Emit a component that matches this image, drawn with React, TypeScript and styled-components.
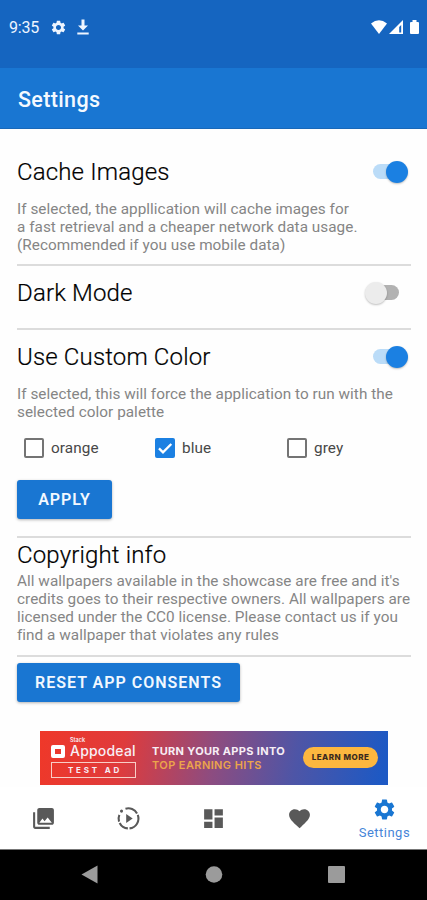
import React from "react";
import styled, { createGlobalStyle } from "styled-components";
import { MdSettings, MdPhotoLibrary, MdDashboard, MdFavorite } from "react-icons/md";

const GlobalStyle = createGlobalStyle`
  * { box-sizing: border-box; }
  body { margin: 0; background: #fff; font-family: Roboto, sans-serif; }
`;
const Screen = styled.div`
  width: 427px; height: 900px; overflow: hidden; background: #fefefe;
  display: flex; flex-direction: column;
`;
const StatusBar = styled.div`
  height: 68px; flex: none; background: #1565c0; color: #eef5ff;
  display: flex; align-items: flex-start; padding: 17px 7px 0 9px;
`;
const Clock = styled.span`
  width: 41px; font-size: 16px; line-height: 22px; letter-spacing: -0.2px;
`;
const StatusIcons = styled.div`
  display: flex; height: 20px; align-items: center; gap: 8px; flex: 1;
`;
const SystemIcons = styled.svg`display: block; margin-top: 2px;`;
const AppBar = styled.header`
  height: 61px; flex: none; background: #1976d2; color: #f4f9ff;
  border-bottom: 1px solid #1968b8;
  display: flex; align-items: center; padding: 3px 18px 0;
`;
const Title = styled.h1`
  margin: 0; font-size: 21.5px; line-height: 28px; font-weight: 500; letter-spacing: 0.35px;
`;
const Scroll = styled.div`height: 658px; flex: none;`;
const Content = styled.main`
  padding: 0 16px 0 17px;
`;
const Section = styled.section<{ $h: number; $top: number }>`
  height: ${p => p.$h}px; padding-top: ${p => p.$top}px;
  border-bottom: 2px solid #dcdcdc;
`;
const Row = styled.div`
  display: flex; justify-content: space-between; align-items: center; height: 32px;
`;
const Heading = styled.h2`
  margin: 0; font-size: 24px; line-height: 32px; font-weight: 300; color: #000;
  letter-spacing: 0.15px; white-space: nowrap; -webkit-text-stroke: 0.2px #000;
`;
const Text = styled.p<{ $gap: number }>`
  margin: ${p => p.$gap}px 0 0; font-size: 15.3px; line-height: 18px; color: #858585;
  letter-spacing: 0.04px; white-space: nowrap;
`;
const Track = styled.span<{ $on: boolean }>`
  width: 31px; height: 15px; border-radius: 8px; display: flex; align-items: center;
  background: ${p => (p.$on ? "#bbdcf8" : "#b2b2b2")};
  margin-right: ${p => (p.$on ? 7 : 12)}px;
  margin-bottom: 1px;
  justify-content: ${p => (p.$on ? "flex-end" : "flex-start")};
`;
const Thumb = styled.span<{ $on: boolean }>`
  width: 22px; height: 22px; border-radius: 50%; flex: none;
  margin: ${p => (p.$on ? "0 -4px 0 0" : "0 0 0 -3px")};
  background: ${p => (p.$on ? "#1b80e2" : "#ececec")};
  box-shadow: 0 1px 2px rgba(0, 0, 0, 0.25);
`;
const Options = styled.div`
  display: grid; grid-template-columns: 131px 132px 1fr; margin-top: 16px; padding-left: 7px;
`;
const Option = styled.label`
  display: flex; align-items: center; gap: 7px; height: 22px;
  font-size: 15.3px; color: #484848; letter-spacing: 0.1px;
`;
const Box = styled.span<{ $on: boolean }>`
  width: 20px; height: 20px; border-radius: 2px; display: flex;
  border: 2px solid ${p => (p.$on ? "#1b80e2" : "#747474")};
  background: ${p => (p.$on ? "#1b80e2" : "#fff")};
`;
const Button = styled.button<{ $w: number; $top: number; $ls: number }>`
  display: block; border: 0; padding: 1px 0 0; width: ${p => p.$w}px; height: 39px;
  margin-top: ${p => p.$top}px; border-radius: 3px; background: #1976d2; color: #f2f8ff;
  font: 600 16px/38px Roboto, sans-serif; letter-spacing: ${p => p.$ls}px;
  box-shadow: 0 1px 3px rgba(0, 0, 0, 0.3);
`;
const Ad = styled.aside`
  width: 348px; height: 54px; margin: 29px 0 0 23px; color: #f7eef5;
  background: linear-gradient(100deg, #ef3829 0%, #df3b3c 24%, #8d4c80 50%, #4e55a6 73%, #1d59c4 98%);
  display: flex; align-items: flex-start;
`;
const Brand = styled.div`width: 85px; margin: 6px 0 0 11px;`;
const Stack = styled.div`
  font: 600 5.5px/6px Inter, sans-serif; padding-left: 19px;
`;
const BrandRow = styled.div`display: flex; align-items: center; gap: 5px; height: 16px;`;
const Logo = styled.span`
  width: 14px; height: 13px; border: 4px solid #fff; border-radius: 2px; flex: none;
`;
const BrandName = styled.span`
  font: 500 14px/16px Inter, sans-serif; letter-spacing: 0.2px;
`;
const TestAd = styled.div`
  height: 16px; margin-top: 3px; border: 1px solid #f8cec7; text-align: center;
  font: 700 8px/15px Inter, sans-serif; letter-spacing: 2.8px; padding-left: 3px;
`;
const Pitch = styled.div`
  width: 134px; margin: 13px 0 0 16px; white-space: nowrap;
  font: 700 11px/14px Inter, sans-serif; letter-spacing: 0.33px;
`;
const Gold = styled.div`color: #eba54b; font-weight: 600; letter-spacing: 0.4px;`;
const Learn = styled.div`
  width: 75px; height: 21px; margin: 16px 0 0 17px; border-radius: 11px; background: #fdb73f;
  color: #3b2a1e; text-align: center; font: 800 8px/21px Inter, sans-serif; letter-spacing: 0.5px;
`;
const TabBar = styled.nav`
  height: 62px; flex: none; background: #fff; color: #595959;
  display: grid; grid-template-columns: repeat(5, 1fr); padding-left: 1px;
`;
const Tab = styled.div<{ $active?: boolean }>`
  display: flex; flex-direction: column; align-items: center;
  padding-top: ${p => (p.$active ? 10 : 18.5)}px;
  color: ${p => (p.$active ? "#1976d2" : "inherit")};
`;
const TabLabel = styled.span`
  font-size: 13px; line-height: 16px; margin-top: 3px; letter-spacing: 0.5px; color: #4585d8;
`;
const SystemNav = styled.div`
  height: 51px; flex: none; background: #000; border-top: 1px solid #777;
`;
const NavSvg = styled.svg`display: block;`;

const Switch = ({ on }: { on: boolean }) => <Track $on={on}><Thumb $on={on} /></Track>;

const Check = ({ on, label }: { on: boolean; label: string }) => (
  <Option>
    <Box $on={on}>
      {on && <svg width="16" height="16" viewBox="0 0 16 16"><path d="M2 8.4l4 4L14.3 4" fill="none" stroke="#fff" strokeWidth="2.3" /></svg>}
    </Box>
    {label}
  </Option>
);

// Broken ring with a dot in its upper-left gap and a play triangle inside
const LiveIcon = () => (
  <svg width="25" height="25" viewBox="0 0 24 24">
    <path
      d="M9.100 2.600A9.500 9.500 0 0 1 20.200 7.200M20.900 8.600A9.500 9.500 0 0 1 13 21.500M11.400 21.500A9.500 9.500 0 0 1 3.500 16.300M2.900 15A9.500 9.500 0 0 1 3.200 8.500"
      fill="none" stroke="currentColor" strokeWidth="2"
    />
    <circle cx="5.300" cy="4.900" r="1.500" fill="currentColor" />
    <path d="M9.800 7.700v8.600l6.200-4.300z" fill="currentColor" />
  </svg>
);

export default function App() {
  return (
    <Screen>
      <GlobalStyle />
      <StatusBar>
        <Clock>9:35</Clock>
        <StatusIcons>
          <MdSettings size={17} />
          <svg width="16" height="18" viewBox="0 0 16 18"><path d="M6.500 1.500h3v6H13l-5 5-5-5h3.500zM2.300 14.500h11.400v2H2.300z" fill="currentColor" /></svg>
        </StatusIcons>
        <SystemIcons width="50" height="17" viewBox="0 0 50 17" fill="#fff">
          <path d="M1 4.500Q9 -2 17 4.500L9 15z" />
          <path d="M19 15L33 1v14z" />
          <path d="M29.200 8v5.500h2V6z" fill="#1565c0" />
          <path d="M41 3h1.500V1h4v2H48q1 0 1 1v10q0 1-1 1h-7q-1 0-1-1V4q0-1 1-1z" />
        </SystemIcons>
      </StatusBar>
      <AppBar><Title>Settings</Title></AppBar>
      <Scroll>
        <Content>
          <Section $h={137} $top={27}>
            <Row><Heading>Cache Images</Heading><Switch on /></Row>
            <Text $gap={12}>If selected, the appllication will cache images for<br />a fast retrieval and a cheaper network data usage.<br />(Recommended if you use mobile data)</Text>
          </Section>
          <Section $h={64} $top={11}>
            <Row><Heading>Dark Mode</Heading><Switch on={false} /></Row>
          </Section>
          <Section $h={208} $top={11}>
            <Row><Heading>Use Custom Color</Heading><Switch on /></Row>
            <Text $gap={12}>If selected, this will force the application to run with the<br />selected color palette</Text>
            <Options><Check on={false} label="orange" /><Check on label="blue" /><Check on={false} label="grey" /></Options>
            <Button $w={95} $top={21} $ls={1}>APPLY</Button>
          </Section>
          <Section $h={119} $top={1}>
            <Heading>Copyright info</Heading>
            <Text $gap={1}>All wallpapers available in the showcase are free and it's<br />credits goes to their respective owners. All wallpapers are<br />licensed under the CC0 license. Please contact us if you<br />find a wallpaper that violates any rules</Text>
          </Section>
          <Button $w={223} $top={6} $ls={1}>RESET APP CONSENTS</Button>
          <Ad>
            <Brand>
              <Stack>Stack</Stack>
              <BrandRow><Logo /><BrandName>Appodeal</BrandName></BrandRow>
              <TestAd>TEST AD</TestAd>
            </Brand>
            <Pitch>TURN YOUR APPS INTO<Gold>TOP EARNING HITS</Gold></Pitch>
            <Learn>LEARN MORE</Learn>
          </Ad>
        </Content>
      </Scroll>
      <TabBar>
        <Tab><MdPhotoLibrary size={25} /></Tab>
        <Tab><LiveIcon /></Tab>
        <Tab><MdDashboard size={25} /></Tab>
        <Tab><MdFavorite size={25} /></Tab>
        <Tab $active><MdSettings size={25} /><TabLabel>Settings</TabLabel></Tab>
      </TabBar>
      <SystemNav>
        <NavSvg width="427" height="50" viewBox="0 0 427 50" fill="#9b9b9b">
          <path d="M81.500 24.500L97.500 15.500v18z" />
          <circle cx="214" cy="24.500" r="8.300" />
          <rect x="328" y="16" width="17" height="17" rx="1" />
        </NavSvg>
      </SystemNav>
    </Screen>
  );
}
